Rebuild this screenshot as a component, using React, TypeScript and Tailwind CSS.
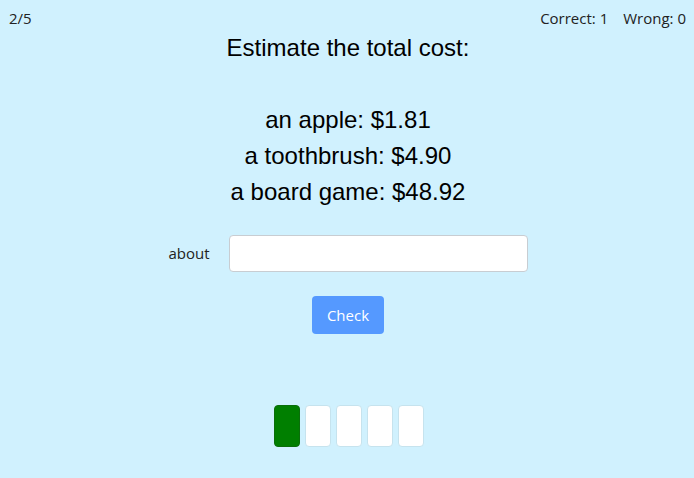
export default function App() {
  const boxes = [true, false, false, false, false];
  return (
    <div className="w-[694px] h-[478px] bg-[#d0f1fe] relative overflow-hidden" style={{ fontFamily: '"Open Sans", "Noto Sans", sans-serif' }}>
      <div className="flex justify-between pl-[9px] pr-[8px] pt-[8px] text-[15px] leading-[20px] text-[#222]">
        <div>2/5</div>
        <div className="flex gap-[15px]">
          <span>Correct: 1</span>
          <span>Wrong: 0</span>
        </div>
      </div>
      <div className="flex flex-col items-center text-[24px] leading-[36px] text-black mt-[2px] pl-[2px]" style={{ fontFamily: '"Liberation Sans", Arial, sans-serif' }}>
        <div>Estimate the total cost:</div>
        <div className="h-[36px]" />
        <div>an apple: $1.81</div>
        <div>a toothbrush: $4.90</div>
        <div>a board game: $48.92</div>
      </div>
      <div className="flex justify-center items-center mt-[25px] gap-[19px] pl-[2px]">
        <span className="text-[15px] text-[#222]">about</span>
        <input className="w-[299px] h-[37px] bg-white border border-[#c8cdd2] rounded-[4px] outline-none" />
      </div>
      <div className="flex justify-center mt-[24px] pl-[2px]">
        <button className="w-[72px] h-[38px] bg-[#5599ff] text-white text-[15px] rounded-[4px]">Check</button>
      </div>
      <div className="flex justify-center gap-[5px] mt-[71px] pl-[3px]">
        {boxes.map((g, i) => (
          <div
            key={i}
            className={
              g
                ? "w-[26px] h-[42px] rounded-[4px] bg-[#007f00] border border-[#0a6e0a]"
                : "w-[26px] h-[42px] rounded-[4px] bg-white border border-[#c6e3ee]"
            }
          />
        ))}
      </div>
    </div>
  );
}
